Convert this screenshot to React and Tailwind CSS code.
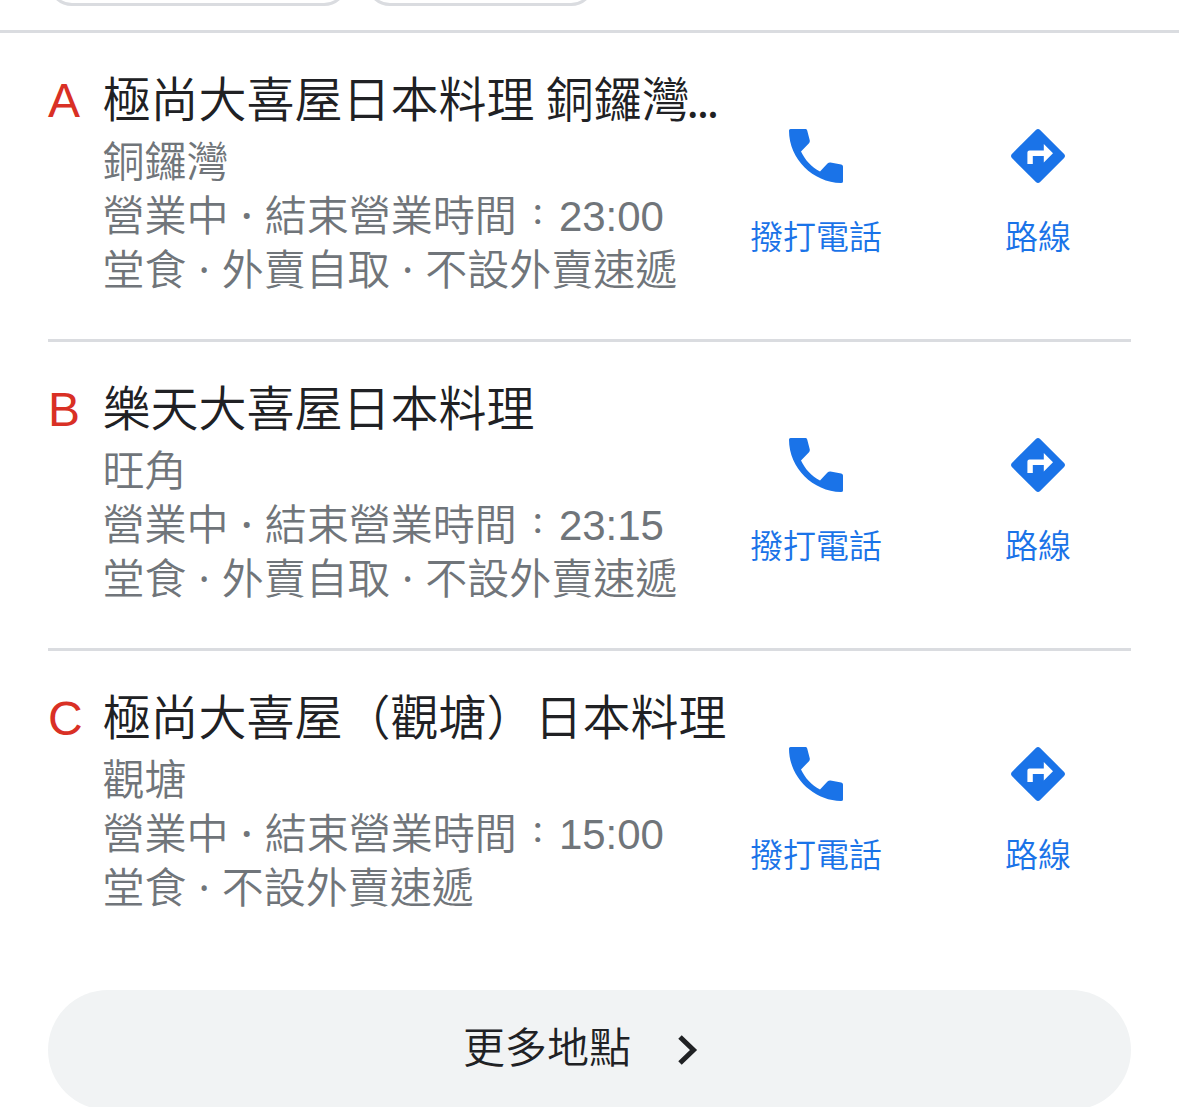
const places = [
  {
    letter: 'A',
    name: '極尚大喜屋日本料理 銅鑼灣',
    truncated: true,
    area: '銅鑼灣',
    closing: '23:00',
    services: ['堂食', '外賣自取', '不設外賣速遞'],
  },
  {
    letter: 'B',
    name: '樂天大喜屋日本料理',
    area: '旺角',
    closing: '23:15',
    services: ['堂食', '外賣自取', '不設外賣速遞'],
  },
  {
    letter: 'C',
    name: '極尚大喜屋（觀塘）日本料理',
    area: '觀塘',
    closing: '15:00',
    services: ['堂食', '不設外賣速遞'],
  },
];

function PhoneIcon() {
  return (
    <svg viewBox="0 0 54 54" className="size-[54px]" fill="#1a73e8" aria-hidden="true">
      <path d="M1.5 0H16.8Q18 0 18.2 1.5L20.8 11.5Q21 13.2 20 14.2L12 22.5C16 31 22.5 38 31 42.5L38.5 34.5Q39.8 33.3 41.5 33.5L52.2 35.5Q54 36 54 37.4V52.5Q54 54 52 54C24 53.5 0 30 0 1.5Q0 0 1.5 0Z" />
    </svg>
  );
}

function DirectionsIcon() {
  return (
    <svg viewBox="0 0 54 54" className="size-[54px]" aria-hidden="true">
      <path
        fill="#1a73e8"
        d="M24.9 .9Q27-.9 29.1 .9L53.1 24.9Q54.9 27 53.1 29.1L29.1 53.1Q27 54.9 24.9 53.1L.9 29.1Q-.9 27 .9 24.9Z"
      />
      <path fill="#fff" d="M16.4 35V23.6Q16.4 21.5 18.5 21.5H32.8V15L42 24.2L32.8 33.5V27H21.8V35Z" />
    </svg>
  );
}

function Action({ icon, label }) {
  return (
    <a className="flex w-[222px] flex-col items-center text-[33px] leading-[48px] text-[#1a73e8]">
      {icon}
      <span className="mt-[31px] whitespace-nowrap">{label}</span>
    </a>
  );
}

function Place({ place }) {
  return (
    <li className="mx-12 flex h-[309px] border-b-[3px] border-[#dadce0] last:border-transparent">
      <span className="w-[54.5px] shrink-0 pt-[38px] text-[48px] leading-[60px] text-[#d93025]">
        {place.letter}
      </span>
      <div className="w-[602.5px] shrink-0 whitespace-nowrap pt-[38px] text-[42px] leading-[54px] text-[#70757a]">
        <h3 className="mb-[5px] h-[60px] text-[48px] leading-[60px] text-[#202124] [word-spacing:-2px]">
          {place.name}
          {place.truncated && (
            <span className="-ml-[3.5px] font-['Noto_Sans_CJK_TC'] leading-none tracking-[-2.8px]">
              ...
            </span>
          )}
        </h3>
        <p>{place.area}</p>
        <p className="h-[54px]">
          營業中{' '}
          <span className="inline-block w-[13px] text-center font-['Noto_Sans'] font-medium leading-none">
            ·
          </span>{' '}
          結束營業時間
          <span className="inline-block w-[42px] -translate-y-[5px] text-center text-[29px] font-medium leading-none">
            ：
          </span>
          {place.closing}
        </p>
        <p className="h-[54px] [word-spacing:-1px]">
          {place.services.map((service, index) => (
            <span key={service}>
              {index > 0 && (
                <>
                  {' '}
                  <span className="inline-block w-[14px] text-center font-['Noto_Sans'] font-normal leading-none">
                    ·
                  </span>{' '}
                </>
              )}
              {service}
            </span>
          ))}
        </p>
      </div>
      <div className="flex shrink-0 pt-24">
        <Action icon={<PhoneIcon />} label="撥打電話" />
        <Action icon={<DirectionsIcon />} label="路線" />
      </div>
    </li>
  );
}

export default function App() {
  return (
    <main
      lang="zh-HK"
      className="h-[1107px] w-[1179px] overflow-hidden bg-white font-['Liberation_Sans','Noto_Sans_CJK_TC',sans-serif] font-[350]"
    >
      <div className="flex h-[33px] items-start gap-[18px] overflow-hidden border-b-[3px] border-[#dadce0] pl-12">
        <div className="-mt-[42px] h-12 w-[300px] shrink-0 rounded-[24px] border-[3px] border-[#dadce0]" />
        <div className="-mt-[42px] h-12 w-[229px] shrink-0 rounded-[24px] border-[3px] border-[#dadce0]" />
      </div>
      <ul>
        {places.map((place) => (
          <Place key={place.letter} place={place} />
        ))}
      </ul>
      <button className="mx-12 mt-[30px] flex h-[120px] w-[1083px] items-center rounded-full bg-[#f1f3f4] pl-[415px] text-[42px] leading-[54px] text-[#202124]">
        <span className="-mt-0.5">更多地點</span>
        <svg viewBox="0 0 20 30" className="ml-[47px] h-[30px] w-5" fill="none" aria-hidden="true">
          <path d="M2 2L15.5 15L2 28" stroke="#202124" strokeWidth="5" />
        </svg>
      </button>
    </main>
  );
}
